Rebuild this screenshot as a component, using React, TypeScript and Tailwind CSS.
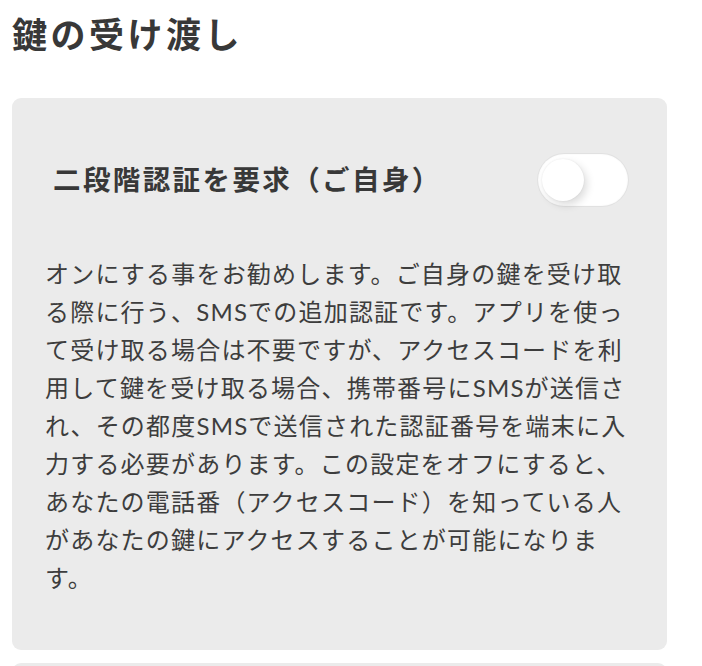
import React, { useState } from "react";

const font = { fontFamily: 'Lato, "Noto Sans CJK JP", sans-serif' };

function Toggle({ on, onChange }: { on: boolean; onChange: () => void }) {
  return (
    <button
      onClick={onChange}
      aria-pressed={on}
      className={
        "relative w-[90px] h-[52px] rounded-full shrink-0 shadow-[0_0_0_1px_rgba(0,0,0,0.04),inset_0_0_2px_rgba(0,0,0,0.06)] transition-colors " +
        (on ? "bg-[#4cd964]" : "bg-white")
      }
    >
      <span
        className={
          "absolute top-[5px] w-[42px] h-[42px] rounded-full bg-white shadow-[3px_4px_8px_rgba(0,0,0,0.14),0_0_2px_rgba(0,0,0,0.08)] transition-all " +
          (on ? "left-[44px]" : "left-[4px]")
        }
      />
    </button>
  );
}

export default function App() {
  const [twoFactor, setTwoFactor] = useState(false);

  return (
    <div className="w-[702px] h-[666px] bg-white overflow-hidden text-[#333]" style={font}>
      <div className="pl-[12px] pt-[13px]">
        <h1 className="text-[35px] leading-[42px] font-bold tracking-[3.5px] text-[#383838]">
          鍵の受け渡し
        </h1>
      </div>

      <div className="flex flex-col gap-[13px] px-[12px] mt-[43px] w-[679px]">
        {/* 二段階認証 */}
        <section className="bg-[#ebebeb] rounded-[9px] pt-[56px] pb-[53px] px-[33px]">
          <div className="flex items-center justify-between pl-[8px] pr-[6px]">
            <h2 className="text-[27.5px] leading-[40px] font-bold tracking-[2.4px] text-[#383838]">
              二段階認証を要求（ご自身）
            </h2>
            <Toggle on={twoFactor} onChange={() => setTwoFactor(!twoFactor)} />
          </div>
          <p className="mt-[49px] text-[24px] leading-[38px] tracking-[1.2px] text-[#3d3d3d]">
            オンにする事をお勧めします。ご自身の鍵を受け取る際に行う、SMSでの追加認証です。アプリを使って受け取る場合は不要ですが、アクセスコードを利用して鍵を受け取る場合、携帯番号にSMSが送信され、その都度SMSで送信された認証番号を端末に入力する必要があります。この設定をオフにすると、あなたの電話番（アクセスコード）を知っている人があなたの鍵にアクセスすることが可能になります。
          </p>
        </section>

        {/* next section (cut off) */}
        <section className="bg-[#ebebeb] rounded-[9px] h-[120px]" />
      </div>
    </div>
  );
}
